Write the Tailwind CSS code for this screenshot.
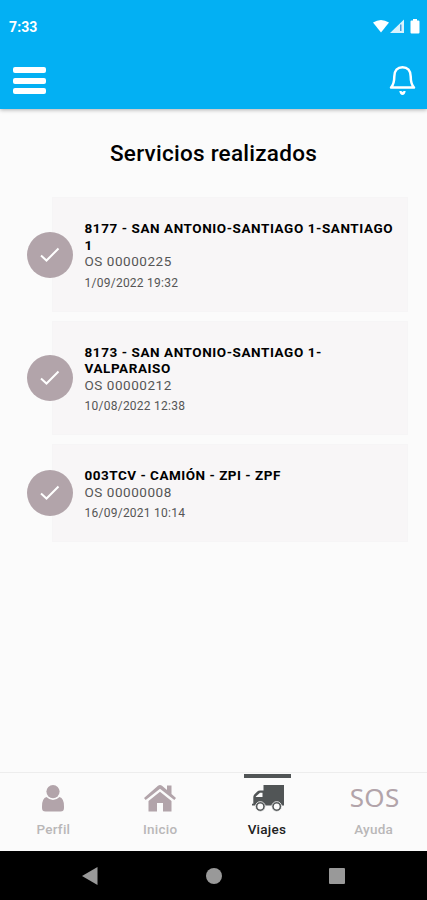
<!DOCTYPE html>
<html lang="es">
  <head>
    <meta charset="UTF-8" />
    <meta name="viewport" content="width=device-width, initial-scale=1.0" />
    <title>Servicios realizados</title>
    <script src="https://cdn.jsdelivr.net/npm/@tailwindcss/browser@4"></script>
  </head>
  <body class="bg-[#fbfbfb] font-[Roboto,sans-serif] text-black">
    <div class="flex h-[900px] w-[427px] flex-col overflow-hidden">
      <!-- Header -->
      <header class="h-[109px] shrink-0 bg-[#03b0f3] text-white shadow-[0_1px_4px_rgba(0,0,0,0.3)]">
        <div class="flex h-[52px] items-center justify-between pt-[2px] pl-[9px] pr-[7px]">
          <span class="text-[14px] font-bold tracking-[0.1px]">7:33</span>
          <svg width="47" height="16" viewBox="0 0 47 16" fill="#fff">
            <path d="M0 3.600Q8 -1.800 16 3.600L8 13.500Z" />
            <path d="M17 14L31 .5V14Z" opacity=".85" />
            <path d="M27 5.500h1.500v6.500h-1.500z" fill="#4b9fe0" />
            <path d="M40 1.500V0h4V1.500h1.500q1 0 1 1v11q0 1-1 1h-7q-1 0-1-1V2.500q0-1 1-1z" />
          </svg>
        </div>
        <div class="flex h-[57px] items-center justify-between pl-[13px] pr-[11px]">
          <div class="flex flex-col gap-[4.500px]">
            <span class="h-[6px] w-[33px] rounded-[2px] bg-white"></span>
            <span class="h-[6px] w-[33px] rounded-[2px] bg-white"></span>
            <span class="h-[6px] w-[33px] rounded-[2px] bg-white"></span>
          </div>
          <svg width="27" height="31" viewBox="0 0 27 31" fill="none" stroke="#fff" stroke-width="2.500">
            <path d="M2 22.500Q5.300 19 5.300 11.500C5.300 5.500 8.500 2.200 13.500 2.200S21.700 5.500 21.700 11.500Q21.700 19 25 22.500Z" stroke-linejoin="round" />
            <path d="M10.300 26h2l1.200 1 1.200-1h2q-.7 3.900-3.200 3.900t-3.200-3.900z" fill="#fff" stroke="none" />
          </svg>
        </div>
      </header>

      <main class="flex-1">
        <h1 class="mt-[29px] text-center text-[22.500px] leading-[30px] font-medium tracking-[0.25px]">Servicios realizados</h1>
        <!-- Services list -->
        <div class="mt-[29px] ml-[26.500px] flex w-[381px] flex-col gap-[9px]">
          <div class="flex h-[115px] items-center">
            <div class="z-10 flex size-[46px] items-center justify-center rounded-full bg-[#b2a4aa]">
              <svg width="20" height="16" viewBox="0 0 20 16" fill="none" stroke="#fff" stroke-width="2">
                <path d="M1 8.500L6.500 13.500L18.500 1.500" />
              </svg>
            </div>
            <div class="-ml-[21px] h-full flex-1 border border-[#f6f5f6] bg-[#f8f6f7] pt-[22px] pl-8">
              <p class="w-[320px] text-[13.500px] leading-[16.500px] font-bold tracking-[0.57px]">8177 - SAN ANTONIO-SANTIAGO 1-SANTIAGO<br />1</p>
              <p class="text-[13.500px] leading-[16.500px] tracking-[0.55px] text-[#555]">OS 00000225</p>
              <p class="mt-[5px] text-[12px] leading-4 tracking-[0.25px] text-[#555]">1/09/2022 19:32</p>
            </div>
          </div>
          <div class="flex h-[114px] items-center">
            <div class="z-10 flex size-[46px] items-center justify-center rounded-full bg-[#b2a4aa]">
              <svg width="20" height="16" viewBox="0 0 20 16" fill="none" stroke="#fff" stroke-width="2">
                <path d="M1 8.500L6.500 13.500L18.500 1.500" />
              </svg>
            </div>
            <div class="-ml-[21px] h-full flex-1 border border-[#f6f5f6] bg-[#f8f6f7] pt-[21.500px] pl-8">
              <p class="w-[320px] text-[13.500px] leading-[16.500px] font-bold tracking-[0.57px]">8173 - SAN ANTONIO-SANTIAGO 1-<br />VALPARAISO</p>
              <p class="text-[13.500px] leading-[16.500px] tracking-[0.55px] text-[#555]">OS 00000212</p>
              <p class="mt-[5px] text-[12px] leading-4 tracking-[0.25px] text-[#555]">10/08/2022 12:38</p>
            </div>
          </div>
          <div class="flex h-[98px] items-center">
            <div class="z-10 flex size-[46px] items-center justify-center rounded-full bg-[#b2a4aa]">
              <svg width="20" height="16" viewBox="0 0 20 16" fill="none" stroke="#fff" stroke-width="2">
                <path d="M1 8.500L6.500 13.500L18.500 1.500" />
              </svg>
            </div>
            <div class="-ml-[21px] h-full flex-1 border border-[#f6f5f6] bg-[#f8f6f7] pt-[22px] pl-8">
              <p class="w-[320px] text-[13.500px] leading-[16.500px] font-bold tracking-[0.5px]">003TCV - CAMIÓN - ZPI - ZPF</p>
              <p class="text-[13.500px] leading-[16.500px] tracking-[0.55px] text-[#555]">OS 00000008</p>
              <p class="mt-[5px] text-[12px] leading-4 tracking-[0.25px] text-[#555]">16/09/2021 10:14</p>
            </div>
          </div>
        </div>
      </main>

      <!-- Tabs -->
      <nav class="grid h-[79px] shrink-0 grid-cols-4 border-t border-[#ededed] text-[13.500px] font-medium tracking-[0.25px] text-[#b9b7b8]">
        <div class="flex flex-col items-center pt-[12px]">
          <svg width="22" height="27" viewBox="0 0 22 27" fill="#b2a4aa">
            <circle cx="11" cy="6.600" r="6.600" />
            <path d="M4.500 12Q7.500 15 11 15t6.500-3Q22 13 22 21.500v1.500q0 3.500-3.500 3.500h-15Q0 26.500 0 23v-1.500Q0 13 4.500 12z" />
          </svg>
          <span class="mt-[7px] leading-5">Perfil</span>
        </div>
        <div class="flex flex-col items-center pt-[12px]">
          <svg width="32" height="27" viewBox="0 0 32 27" fill="#b2a4aa">
            <path d="M16 6.700L27.500 16v10.500H19V18h-6v8.500H4.500V16z" />
            <path d="M16 0q1 0 2 .8L23 5V.5h4.500V9L32 13l-1.700 2L16 3.700 1.700 15 0 13 14 .8Q15 0 16 0z" />
          </svg>
          <span class="mt-[7px] leading-5">Inicio</span>
        </div>
        <div class="flex flex-col items-center text-[#222]">
          <span class="mt-px ml-[2px] h-1 w-[47px] bg-[#515556]"></span>
          <svg class="mt-[7px] ml-[3px]" width="33" height="27" viewBox="0 0 33 27" fill="#515556">
            <path d="M11.500 0h20.500v20.500H0v-1.800h1.300V12q0-1.500 1-2.500l3-3Q6.300 5.500 8 5.500h3.500zM3.800 12h6.700V7.800H8L3.800 11.500z" fill-rule="evenodd" />
            <circle cx="8.300" cy="21.500" r="4.900" stroke="#fbfbfb" stroke-width=".8" />
            <circle cx="24.700" cy="21.500" r="4.900" stroke="#fbfbfb" stroke-width=".8" />
            <circle cx="8.300" cy="21.500" r="2.900" fill="#fbfbfb" />
            <circle cx="24.700" cy="21.500" r="2.900" fill="#fbfbfb" />
          </svg>
          <span class="mt-[7px] leading-5">Viajes</span>
        </div>
        <div class="flex flex-col items-center pt-[11px]">
          <span class="ml-[2px] h-[27px] font-['Noto_Sans',sans-serif] text-[26px] leading-[27px] font-normal text-[#b2a4aa]">SOS</span>
          <span class="mt-2 leading-5">Ayuda</span>
        </div>
      </nav>

      <!-- System buttons -->
      <div class="flex h-[49px] shrink-0 items-center bg-black pl-[82px]">
        <svg width="16" height="18" viewBox="0 0 16 18" fill="#999">
          <path d="M0 9L15.500 0V18z" />
        </svg>
        <span class="ml-[108px] size-4 rounded-full bg-[#999]"></span>
        <span class="ml-[107px] size-4 rounded-[1px] bg-[#999]"></span>
      </div>
    </div>
  </body>
</html>
